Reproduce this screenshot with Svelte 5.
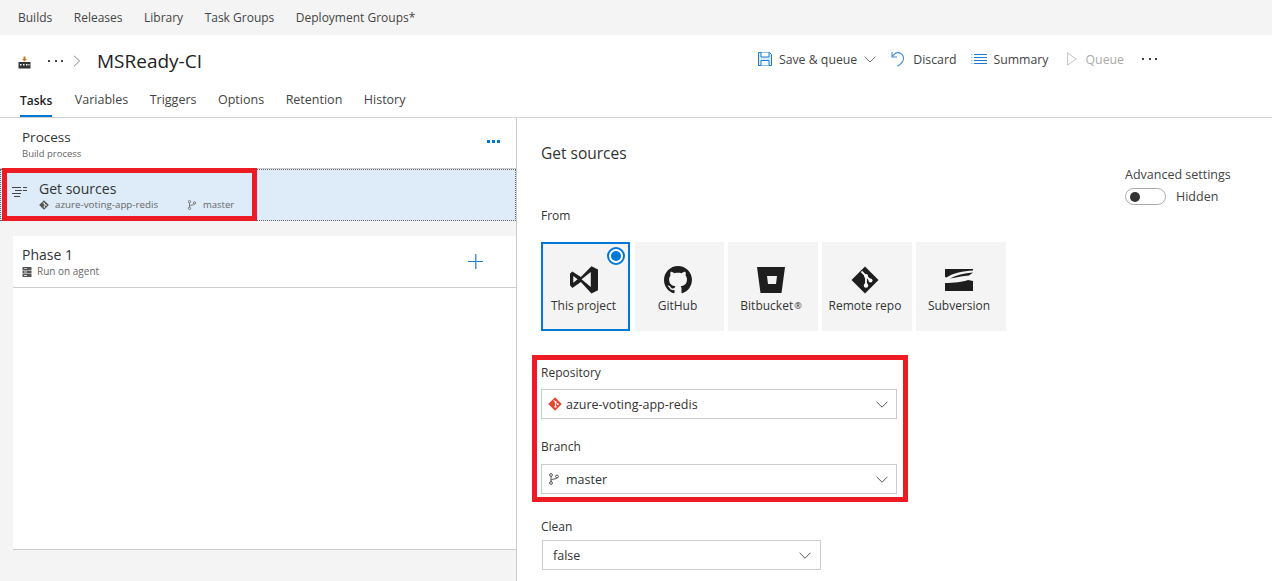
<script>
  // Build definition editor: tabs, process list on the left, source settings on the right.
  const hubs = ['Builds', 'Releases', 'Library', 'Task Groups', 'Deployment Groups*'];
  const tabs = ['Tasks', 'Variables', 'Triggers', 'Options', 'Retention', 'History'];
  const sources = [
    { id: 'vsts', label: 'This project', selected: true },
    { id: 'github', label: 'GitHub' },
    { id: 'bitbucket', label: 'Bitbucket', mark: '®' },
    { id: 'git', label: 'Remote repo' },
    { id: 'svn', label: 'Subversion' },
  ];
</script>

{#snippet branchIcon(size)}
  <svg width={size} height={size} viewBox="0 0 12 12" fill="none" stroke="currentColor" stroke-width="1">
    <circle cx="3" cy="2" r="1.4" />
    <circle cx="3" cy="10" r="1.4" />
    <circle cx="9" cy="3.5" r="1.4" />
    <path d="M3 3.4v5.2M3 7.5c0-2 6-1 6-2.6" />
  </svg>
{/snippet}

{#snippet gitDiamond(size, color)}
  <svg width={size} height={size} viewBox="0 0 28 28">
    <path fill={color} d="M14 0.5 27.5 14 14 27.5 0.5 14z" />
    <path fill="none" stroke="#fff" stroke-width="1.8" d="M10.5 5.5 15 10v8M15 10l4.5 4.5" />
    <circle cx="15" cy="10" r="2" fill="#fff" />
    <circle cx="15" cy="19.5" r="2.2" fill="#fff" />
    <circle cx="19.5" cy="14.5" r="2" fill="#fff" />
  </svg>
{/snippet}

{#snippet chevron(color = '#555')}
  <svg class="chev" width="12" height="7" viewBox="0 0 12 7" fill="none" stroke={color} stroke-width="1">
    <path d="M0.6 0.8 6 6.2 11.4 0.8" />
  </svg>
{/snippet}

{#snippet dots()}
  <span class="dots"><i></i><i></i><i></i></span>
{/snippet}

<div class="page">
  <nav class="hubs">
    {#each hubs as h}<span>{h}</span>{/each}
  </nav>

  <header class="head">
    <div class="title-row">
      <div class="crumbs">
        <svg class="build-ico" width="13" height="13" viewBox="0 0 13 13">
          <path fill="#333" d="M0.5 6h12v6.5h-12z" />
          <path fill="#fff" d="M2 8h1.5v1.5H2zM5 8h1.5v1.5H5zM8 8h1.5v1.5H8zM10.5 8h1v1.5h-1z" />
          <path fill="#c67a1e" d="M5.5 0.5h2v2.5h1.5L6.5 5.5 4 3h1.5z" />
        </svg>
        {@render dots()}
        <svg class="crumb-sep" width="8" height="12" viewBox="0 0 8 12" fill="none" stroke="#888" stroke-width="1"><path d="M1 0.8 6.6 6 1 11.2" /></svg>
        <h1>MSReady-CI</h1>
      </div>
      <div class="actions">
        <span class="act save">
          <svg width="14" height="14" viewBox="0 0 14 14" fill="none" stroke="#1a7ad4" stroke-width="1">
            <path d="M0.5 0.5h11l2 2v11H0.5z" fill="#dcebf9" />
            <path d="M3 0.5v4.5h8V0.5M3 13.5V8.5h8v5" fill="#fff" />
          </svg>
          Save &amp; queue
          <svg width="12" height="7" viewBox="0 0 12 7" fill="none" stroke="#777" stroke-width="1"><path d="M0.6 0.8 6 6 11.4 0.8" /></svg>
        </span>
        <span class="act">
          <svg width="14" height="16" viewBox="0 0 14 16" fill="none" stroke="#3f8ddb" stroke-width="1.1">
            <path d="M1 1v5h5M1.2 5.6C3 3 5 1.6 7 1.6c3 0 5.6 2.6 5.6 5.6 0 3.4-2.6 5.8-6.2 8" />
          </svg>
          Discard
        </span>
        <span class="act summary">
          <svg width="16" height="12" viewBox="0 0 16 12" stroke="#1a7ad4" stroke-width="1">
            <path d="M3 1.5h13M3 4.5h13M3 7.5h13M3 10.5h13" />
            <path stroke="#8bbbe9" d="M0 1.5h1.5M0 4.5h1.5M0 7.5h1.5M0 10.5h1.5" />
          </svg>
          Summary
        </span>
        <span class="act off">
          <svg width="10" height="14" viewBox="0 0 10 14" fill="none" stroke="#c4c4c4" stroke-width="1"><path d="M0.6 0.8 9.2 7 0.6 13.2z" /></svg>
          Queue
        </span>
        {@render dots()}
      </div>
    </div>
    <div class="tabs">
      {#each tabs as t, i}<span class:on={i === 0}>{t}</span>{/each}
    </div>
  </header>

  <div class="body">
    <aside class="left">
      <div class="process">
        <div>
          <div class="name">Process</div>
          <div class="sub">Build process</div>
        </div>
        <span class="blue-dots"><i></i><i></i><i></i></span>
      </div>

      <div class="sources-row">
        <svg class="lines" width="15" height="11" viewBox="0 0 15 11" stroke="#444" stroke-width="1">
          <path d="M0 0.5h9M11 0.5h4M3 3.5h7M11 3.5h4M0 6.5h9M2 9.5h6" />
        </svg>
        <div>
          <div class="name">Get sources</div>
          <div class="sub meta">
            <span class="repo-ico">{@render gitDiamond(10, '#555')}</span>
            <span class="repo">azure-voting-app-redis</span>
            <span class="branch-ico">{@render branchIcon(10)}</span>
            <span>master</span>
          </div>
        </div>
      </div>

      <div class="phase">
        <div>
          <div class="name">Phase 1</div>
          <div class="sub agent">
            <svg width="10" height="10" viewBox="0 0 10 10">
              <path fill="#555" d="M0.5 0h9v3h-9zM0.5 3.5h9v3h-9zM0.5 7h9v3h-9z" />
              <path fill="#ddd" d="M2 1h3v.8H2zM2 4.6h3v.8H2zM2 8.1h3v.8H2z" />
            </svg>
            Run on agent
          </div>
        </div>
        <svg class="plus" width="15" height="15" viewBox="0 0 15 15">
          <path fill="#1a7ad4" d="M0 7h15v1H0z" />
          <path fill="#4d94d8" d="M7 0h1.5v15H7z" />
        </svg>
      </div>
    </aside>

    <main class="right">
      <div class="right-top">
        <h2>Get sources</h2>
        <div class="advanced">
          <div>Advanced settings</div>
          <div class="toggle-row">
            <span class="toggle"><i></i></span>
            <span>Hidden</span>
          </div>
        </div>
      </div>

      <div class="label from">From</div>
      <div class="tiles">
        {#each sources as s}
          <div class="tile {s.id}" class:sel={s.selected}>
            {#if s.selected}<span class="radio"><i></i></span>{/if}
            <span class="logo">
              {#if s.id === 'vsts'}
                <svg width="28" height="28" viewBox="0 0 28.3 28">
                  <path fill="#1e1e1e" fill-rule="evenodd" d="M21.7 0 28.3 3.3V24.3L21.7 27.7 11 16 2.3 22 0 19.3V7.7L2.3 5.3 11 11zM21 6 11.7 13.3 21 21zM3.3 10V16.7L7.7 13.3z" />
                </svg>
              {:else if s.id === 'github'}
                <svg width="28" height="28" viewBox="0 0 16 16">
                  <path fill="#1e1e1e" d="M8 0C3.58 0 0 3.58 0 8c0 3.54 2.29 6.53 5.47 7.59.4.07.55-.17.55-.38 0-.19-.01-.82-.01-1.49-2.01.37-2.53-.49-2.69-.94-.09-.23-.48-.94-.82-1.13-.28-.15-.68-.52-.01-.53.63-.01 1.08.58 1.23.82.72 1.21 1.87.87 2.33.66.07-.52.28-.87.51-1.07-1.78-.2-3.64-.89-3.64-3.95 0-.87.31-1.59.82-2.15-.08-.2-.36-1.02.08-2.12 0 0 .67-.21 2.2.82.64-.18 1.32-.27 2-.27s1.36.09 2 .27c1.53-1.04 2.2-.82 2.2-.82.44 1.1.16 1.92.08 2.12.51.56.82 1.27.82 2.15 0 3.07-1.87 3.75-3.65 3.95.29.25.54.73.54 1.48 0 1.07-.01 1.93-.01 2.2 0 .21.15.46.55.38A8.01 8.01 0 0 0 16 8c0-4.42-3.58-8-8-8z" />
                </svg>
              {:else if s.id === 'bitbucket'}
                <svg width="28" height="26" viewBox="0 0 28 26">
                  <path fill="#1e1e1e" fill-rule="evenodd" d="M0 0H28L24.5 26H3.5zM10 9 11 17H19L20 9z" />
                </svg>
              {:else if s.id === 'git'}
                {@render gitDiamond(28, '#1e1e1e')}
              {:else}
                <svg width="28" height="22" viewBox="0 0 28 22">
                  <path fill="#1e1e1e" d="M0 0H28V1.5C18 2 8 4 1.5 8.5L0 8zM5 9.5C11 6 19 4 28 3.5L24 6.5C18 7 11 8.5 5 9.5zM0 14C9 14 18 13 23 11L28 12V22H0z" />
                </svg>
              {/if}
            </span>
            <span class="tile-label">{s.label}{#if s.mark}<small>{s.mark}</small>{/if}</span>
          </div>
        {/each}
      </div>

      <div class="fields">
        <div class="label">Repository</div>
        <div class="select wide">
          <span class="sel-ico">{@render gitDiamond(14, '#e2492f')}</span>
          <span>azure-voting-app-redis</span>
          {@render chevron()}
        </div>
        <div class="label branch-label">Branch</div>
        <div class="select wide branch-select">
          <span class="sel-ico">{@render branchIcon(12)}</span>
          <span>master</span>
          {@render chevron()}
        </div>
      </div>

      <div class="label clean">Clean</div>
      <div class="select narrow">
        <span>false</span>
        {@render chevron()}
      </div>
    </main>
  </div>

  <!-- Annotation boxes drawn over the screenshot -->
  <div class="mark mark-a"></div>
  <div class="mark mark-b"></div>
</div>

<style>
  :global(body) {
    margin: 0;
    background: #fff;
  }

  .page {
    position: relative;
    width: 1272px;
    height: 581px;
    overflow: hidden;
    font-family: 'Open Sans', 'Noto Sans', sans-serif;
    font-size: 12px;
    color: #333;
  }

  .hubs {
    height: 35px;
    box-sizing: border-box;
    background: #f4f4f4;
    display: flex;
    align-items: center;
    gap: 21.5px;
    padding: 0 0 0 18px;
    color: #444;
  }

  .head {
    height: 83px;
    box-sizing: border-box;
    border-bottom: 1px solid #d4d4d4;
  }
  .title-row {
    height: 48px;
    display: flex;
    justify-content: space-between;
    align-items: flex-start;
  }
  .crumbs {
    display: flex;
    align-items: center;
    height: 52px;
    padding-left: 18px;
  }
  .build-ico { margin-right: 17px; margin-top: 2px; }
  .dots {
    display: flex;
    gap: 4.5px;
  }
  .dots i {
    width: 2px;
    height: 2px;
    background: #444;
  }
  .crumb-sep { margin-left: 10px; }
  h1 {
    margin: 0 0 0 16px;
    font-size: 19px;
    font-weight: 400;
    color: #222;
  }
  .actions {
    display: flex;
    align-items: center;
    height: 48px;
    padding-right: 115px;
    color: #444;
    font-size: 12.3px;
  }
  .act {
    display: flex;
    align-items: center;
    gap: 8px;
    margin-right: 15px;
    white-space: nowrap;
  }
  .save { gap: 7px; }
  .summary { gap: 6px; margin-right: 18px; }
  .act.off { color: #aaa; margin-right: 18px; gap: 9px; }

  .tabs {
    display: flex;
    gap: 21.5px;
    padding-left: 20px;
    height: 34px;
    align-items: flex-start;
    color: #444;
    font-size: 12.5px;
  }
  .tabs span {
    height: 34px;
    box-sizing: border-box;
    padding-top: 8px;
    border-bottom: 2px solid transparent;
  }
  .tabs span.on {
    color: #222;
    font-size: 12px;
    font-weight: 600;
    padding-top: 9px;
    margin-right: 1px;
    border-bottom-color: #0078d7;
  }

  .body {
    display: flex;
    height: 463px;
  }
  .left {
    width: 516px;
    background: #f4f4f4;
    flex: none;
  }
  .right {
    flex: 1;
    border-left: 1px solid #ccc;
    padding: 0 0 0 24px;
  }

  .name {
    font-size: 14px;
    line-height: 19px;
    color: #333;
  }
  .sub {
    font-size: 9.5px;
    line-height: 13px;
    color: #666;
  }

  .process {
    background: #fff;
    height: 51px;
    box-sizing: border-box;
    border-bottom: 1px solid #ccc;
    padding: 10px 16px 0 22px;
    display: flex;
    justify-content: space-between;
    align-items: flex-start;
  }
  .process .name { font-size: 13.5px; }
  .blue-dots {
    display: flex;
    gap: 2px;
    margin-top: 12px;
  }
  .blue-dots i {
    width: 3px;
    height: 3px;
    background: #0078d7;
  }

  .sources-row {
    height: 52px;
    box-sizing: border-box;
    background: #deebf8;
    border: 1px dotted #666;
    padding: 9px 0 0 11px;
    display: flex;
    gap: 12px;
  }
  .lines { margin-top: 8px; }
  .meta {
    display: flex;
    align-items: center;
    line-height: 12px;
    margin-top: 1px;
  }
  .repo-ico, .branch-ico { display: flex; }
  .repo-ico { margin-right: 6px; }
  .repo { width: 132px; font-size: 9.8px; }
  .branch-ico { margin-right: 6px; color: #666; }

  .phase {
    margin: 15px 0 0 13px;
    height: 314px;
    box-sizing: border-box;
    background: linear-gradient(#fff 0 51px, #ccc 51px 52px, #fff 52px);
    border-bottom: 1px solid #ccc;
    padding: 9px 33px 0 9px;
    display: flex;
    justify-content: space-between;
    align-items: flex-start;
  }
  .agent {
    display: flex;
    align-items: center;
    gap: 5px;
    margin-top: 1px;
    font-size: 10px;
  }
  .plus { margin-top: 9px; }

  .right-top {
    display: flex;
    justify-content: space-between;
    align-items: flex-start;
    height: 88px;
  }
  h2 {
    margin: 25px 0 0;
    font-size: 15.5px;
    line-height: 21px;
    font-weight: 400;
    color: #333;
  }
  .advanced {
    margin: 48px 41px 0 0;
    width: 106px;
    line-height: 17px;
    color: #444;
    font-size: 12.5px;
    white-space: nowrap;
  }
  .toggle-row {
    display: flex;
    align-items: center;
    gap: 10px;
    margin-top: 5px;
  }
  .toggle {
    width: 41px;
    height: 17px;
    box-sizing: border-box;
    border: 1px solid #aaa;
    border-radius: 9px;
    display: flex;
    align-items: center;
    padding-left: 4px;
  }
  .toggle i {
    width: 10px;
    height: 10px;
    border-radius: 50%;
    background: #333;
  }

  .label {
    line-height: 17px;
    color: #333;
  }
  .from { margin-top: 1px; }

  .tiles {
    display: flex;
    gap: 4px;
    margin-top: 18px;
  }
  .tile {
    position: relative;
    width: 90px;
    height: 89px;
    box-sizing: border-box;
    background: #f4f4f4;
    display: flex;
    flex-direction: column;
    align-items: center;
    color: #333;
    padding: 24px 4px 0 0;
  }
  .tile.vsts { width: 89px; margin-right: 1px; }
  .tile.github { width: 89px; }
  .tile.sel {
    border: 2px solid #0078d7;
    padding: 22px 4px 0 0;
  }
  .logo {
    height: 28px;
    display: flex;
    align-items: center;
    justify-content: center;
  }
  .tile-label {
    margin-top: 2px;
    line-height: 19px;
    white-space: nowrap;
  }
  .tile-label small {
    font-size: 9px;
    margin-left: 1px;
    vertical-align: 1px;
  }
  .radio {
    position: absolute;
    top: 3px;
    right: 3px;
    width: 18px;
    height: 18px;
    box-sizing: border-box;
    border: 2px solid #0078d7;
    border-radius: 50%;
    background: #fff;
    display: flex;
    align-items: center;
    justify-content: center;
  }
  .radio i {
    width: 10px;
    height: 10px;
    border-radius: 50%;
    background: #0078d7;
  }

  .fields { margin-top: 33px; }
  .select {
    display: flex;
    align-items: center;
    height: 30px;
    box-sizing: border-box;
    border: 1px solid #ccc;
    background: #fff;
    color: #333;
    font-size: 12.5px;
  }
  .select.wide { width: 356px; margin-top: 8px; padding: 0 8px 0 6px; }
  .select.branch-select { margin-top: 9px; }
  .select.narrow { width: 279px; margin: 5px 0 0 1px; padding: 0 9px 0 10px; }
  .sel-ico { display: flex; width: 18px; color: #555; }
  .chev { margin-left: auto; }
  .branch-label { margin-top: 19px; }
  .clean { margin-top: 24px; }

  .mark {
    position: absolute;
    box-sizing: border-box;
    border: 5px solid #ed1c24;
    pointer-events: none;
  }
  .mark-a { left: 2px; top: 168px; width: 255px; height: 53px; }
  .mark-b { left: 532px; top: 355px; width: 376px; height: 147px; }
</style>
